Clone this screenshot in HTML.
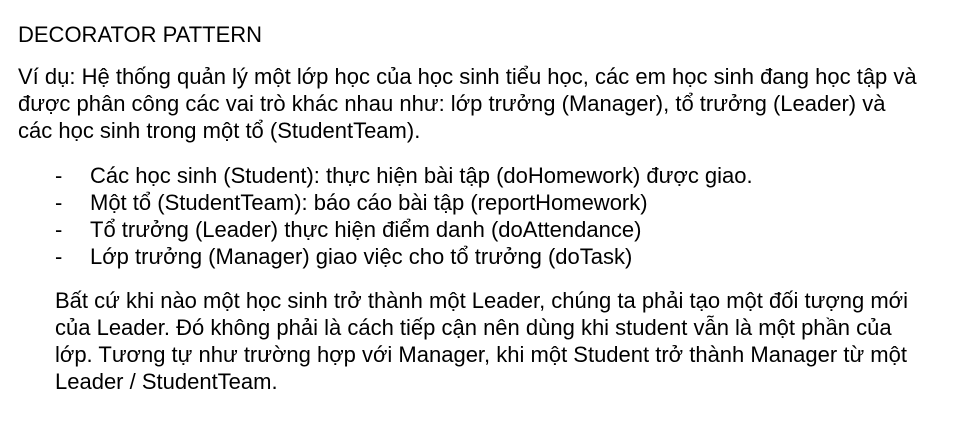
<!DOCTYPE html>
<html><head><meta charset="utf-8"><style>
body{margin:0;width:966px;height:448px;background:#fff;font-family:"Liberation Sans",Arial,sans-serif;font-size:22px;color:#000;position:relative;overflow:hidden}
div{position:absolute;white-space:nowrap;line-height:22px}
</style></head><body>
<div style="left:18px;top:24px">DECORATOR PATTERN</div>
<div style="left:18px;top:66px">Ví dụ: Hệ thống quản lý một lớp học của học sinh tiểu học, các em học sinh đang học tập và</div>
<div style="left:18px;top:93px">được phân công các vai trò khác nhau như: lớp trưởng (Manager), tổ trưởng (Leader) và</div>
<div style="left:18px;top:120px">các học sinh trong một tổ (StudentTeam).</div>
<div style="left:55px;top:165px">-</div><div style="left:90px;top:165px">Các học sinh (Student): thực hiện bài tập (doHomework) được giao.</div>
<div style="left:55px;top:192px">-</div><div style="left:90px;top:192px">Một tổ (StudentTeam): báo cáo bài tập (reportHomework)</div>
<div style="left:55px;top:219px">-</div><div style="left:90px;top:219px">Tổ trưởng (Leader) thực hiện điểm danh (doAttendance)</div>
<div style="left:55px;top:246px">-</div><div style="left:90px;top:246px">Lớp trưởng (Manager) giao việc cho tổ trưởng (doTask)</div>
<div style="left:55px;top:290px">Bất cứ khi nào một học sinh trở thành một Leader, chúng ta phải tạo một đối tượng mới</div>
<div style="left:55px;top:317px">của Leader. Đó không phải là cách tiếp cận nên dùng khi student vẫn là một phần của</div>
<div style="left:55px;top:344px">lớp. Tương tự như trường hợp với Manager, khi một Student trở thành Manager từ một</div>
<div style="left:55px;top:371px">Leader / StudentTeam.</div>
</body></html>
